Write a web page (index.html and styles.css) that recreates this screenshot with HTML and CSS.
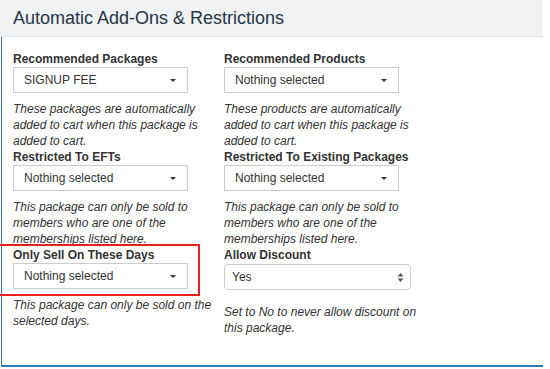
FILE: index.html
```html
<!DOCTYPE html>
<html lang="en">
<head>
    <meta charset="UTF-8">
    <title>Automatic Add-Ons &amp; Restrictions</title>
    <link rel="stylesheet" href="styles.css">
</head>
<body>

    <div class="section">
        <div class="section-header">
            <h2>Automatic Add-Ons &amp; Restrictions</h2>
        </div>

        <div class="section-body">
            <div class="fields">
                <div class="field">
                    <label>Recommended Packages</label>
                    <div class="picker"><span>SIGNUP FEE</span><i class="caret"></i></div>
                    <p class="help">These packages are automatically added to cart when this package is added to cart.</p>
                </div>
                <div class="field">
                    <label>Recommended Products</label>
                    <div class="picker"><span>Nothing selected</span><i class="caret"></i></div>
                    <p class="help">These products are automatically added to cart when this package is added to cart.</p>
                </div>

                <div class="field">
                    <label>Restricted To EFTs</label>
                    <div class="picker"><span>Nothing selected</span><i class="caret"></i></div>
                    <p class="help">This package can only be sold to members who are one of the memberships listed here.</p>
                </div>
                <div class="field">
                    <label>Restricted To Existing Packages</label>
                    <div class="picker"><span>Nothing selected</span><i class="caret"></i></div>
                    <p class="help">This package can only be sold to members who are one of the memberships listed here.</p>
                </div>

                <div class="field highlighted">
                    <label>Only Sell On These Days</label>
                    <div class="picker"><span>Nothing selected</span><i class="caret"></i></div>
                    <p class="help">This package can only be sold on the selected days.</p>
                </div>
                <div class="field">
                    <label>Allow Discount</label>
                    <div class="native-select">
                        <span>Yes</span>
                        <svg class="updown" width="7" height="11" viewBox="0 0 7 11">
                            <path d="M3.5 1 L6.5 4.5 L0.5 4.5 Z" fill="#555"/>
                            <path d="M3.5 10 L6.5 6.5 L0.5 6.5 Z" fill="#555"/>
                        </svg>
                    </div>
                    <p class="help help-spaced">Set to No to never allow discount on this package.</p>
                </div>
            </div>
        </div>
    </div>

</body>
</html>
```

FILE: styles.css
```css
/* Page */
body {
    margin: 0;
    font-family: "Liberation Sans", Arial, sans-serif;
    color: #333;
    background: #fff;
}

.section {
    width: 543px;
}

.section-header {
    height: 36px;
    background: #f1f2f4;
    border-bottom: 1px solid #e1e4e8;
    padding-left: 13px;
}

.section-header h2 {
    margin: 0;
    font-size: 18px;
    font-weight: normal;
    line-height: 37px;
    color: #263645;
}

.section-body {
    margin-left: 1px;
    border-left: 1px solid #3d77a6;
    border-bottom: 2px solid #2b7bb8;
    padding: 14px 0 29px 11px;
}

.fields {
    display: grid;
    grid-template-columns: 200px 200px;
    column-gap: 11px;
}

.field {
    position: relative;
}

.field label {
    display: block;
    font-size: 12px;
    font-weight: bold;
    line-height: 16px;
    color: #333;
}

/* bootstrap-select style button */
.picker {
    width: 175px;
    height: 26px;
    box-sizing: border-box;
    border: 1px solid #ccc;
    background: #fff;
    display: flex;
    align-items: center;
    justify-content: space-between;
    padding: 0 11px 0 10px;
    font-size: 12px;
}

.caret {
    width: 0;
    height: 0;
    border-left: 3px solid transparent;
    border-right: 3px solid transparent;
    border-top: 3px solid #333;
}

.native-select {
    width: 187px;
    height: 26px;
    margin-top: 1px;
    box-sizing: border-box;
    border: 1px solid #ccc;
    border-radius: 4px;
    display: flex;
    align-items: center;
    justify-content: space-between;
    padding: 0 6px 0 7px;
    font-size: 12px;
}

.help {
    margin: 8px 0 0;
    font-size: 12px;
    font-style: italic;
    line-height: 16px;
    color: #333;
}

.help-spaced {
    margin-top: 14px;
}

/* red annotation box */
.highlighted::before {
    content: "";
    position: absolute;
    left: -16px;
    top: -3px;
    width: 199px;
    height: 48px;
    border: 2px solid #e8211f;
}
```
